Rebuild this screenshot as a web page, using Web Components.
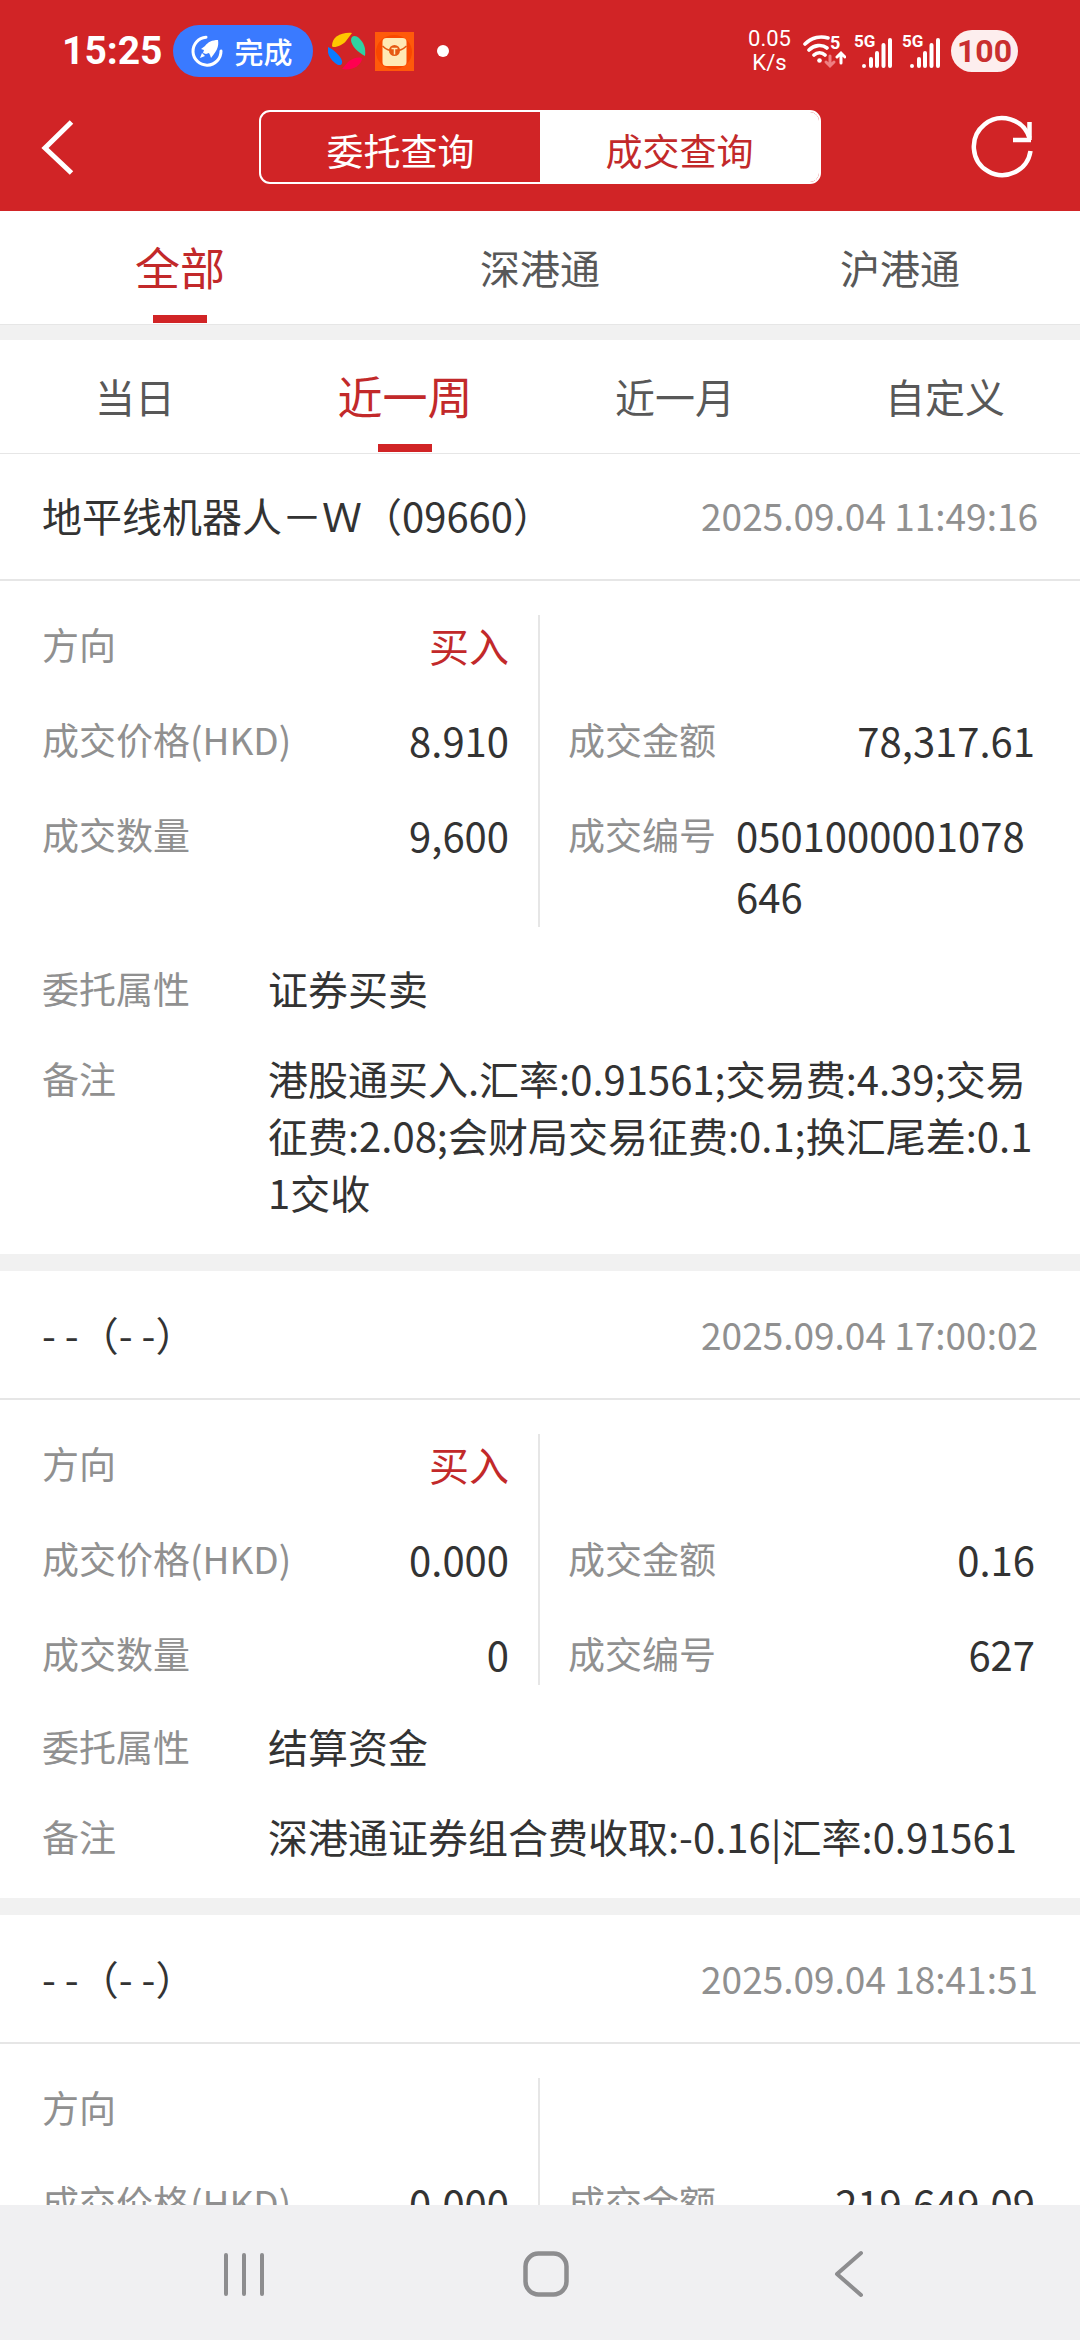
<!DOCTYPE html>
<html lang="zh-CN">
<head>
<meta charset="utf-8">
<meta name="viewport" content="width=device-width, initial-scale=1">
<title>成交查询</title>
<style>
  :root {
    --brand: #d12426;
    --brand-text: #c2292a;
    --line: #e6e6e6;
    --band: #f1f1f1;
    --ink: #333;
    --muted: #909090;
    --gutter: 42px;
  }
  body {
    margin: 0;
    height: 100vh;
    display: flex;
    flex-direction: column;
    background: #fff;
    color: var(--ink);
    font-family: "Noto Sans CJK SC", sans-serif;
    font-size: 40px;
  }
  main { flex: 1; min-height: 0; overflow: hidden; }
</style>
</head>
<body>
<status-bar></status-bar>
<title-bar></title-bar>
<tab-strip items="全部,深港通,沪港通" current="0" label="市场"></tab-strip>
<band-gap></band-gap>
<tab-strip items="当日,近一周,近一月,自定义" current="1" label="时间范围"></tab-strip>
<main>
  <trade-record name="地平线机器人－Ｗ（09660）" time="2025.09.04 11:49:16">
    <data-field slot="left" label="方向" tone="buy">买入</data-field>
    <data-field slot="left" label="成交价格(HKD)">8.910</data-field>
    <data-field slot="left" label="成交数量">9,600</data-field>
    <data-field slot="right"></data-field>
    <data-field slot="right" label="成交金额">78,317.61</data-field>
    <data-field slot="right" label="成交编号">0501000001078646</data-field>
    <note-field slot="notes" label="委托属性">证券买卖</note-field>
    <note-field slot="notes" label="备注">港股通买入.汇率:0.91561;交易费:4.39;交易征费:2.08;会财局交易征费:0.1;换汇尾差:0.11交收</note-field>
  </trade-record>
  <trade-record name="- -（- -）" time="2025.09.04 17:00:02">
    <data-field slot="left" label="方向" tone="buy">买入</data-field>
    <data-field slot="left" label="成交价格(HKD)">0.000</data-field>
    <data-field slot="left" label="成交数量">0</data-field>
    <data-field slot="right"></data-field>
    <data-field slot="right" label="成交金额">0.16</data-field>
    <data-field slot="right" label="成交编号">627</data-field>
    <note-field slot="notes" label="委托属性">结算资金</note-field>
    <note-field slot="notes" label="备注">深港通证券组合费收取:-0.16|汇率:0.91561</note-field>
  </trade-record>
  <trade-record name="- -（- -）" time="2025.09.04 18:41:51">
    <data-field slot="left" label="方向"></data-field>
    <data-field slot="left" label="成交价格(HKD)">0.000</data-field>
    <data-field slot="right"></data-field>
    <data-field slot="right" label="成交金额">219,649.09</data-field>
  </trade-record>
</main>
<system-nav></system-nav>

<script>
const define = (name, render) => customElements.define(name, class extends HTMLElement {
  connectedCallback() {
    if (this.shadowRoot) return;
    this.attachShadow({ mode: 'open' }).innerHTML = render(this);
  }
});

const signal = `
  <svg width="38" height="44" viewBox="0 -4 38 44" fill="none" stroke="#fff" stroke-width="4" stroke-linecap="round">
    <text x="0" y="14" font-family="Roboto" font-weight="700" font-size="17" fill="#fff" stroke="none">5G</text>
    <path d="M10 33v0M17 26v7M23 20v13M29.500 12v21M36 7v26"/>
  </svg>`;

define('status-bar', () => `
  <style>
    :host { display: flex; align-items: center; justify-content: space-between; height: 102px;
      padding: 0 62px 0 62px; background: var(--brand); color: #fff; font-family: Roboto, sans-serif; }
    .group { display: flex; align-items: center; }
    .time { font-size: 39px; font-weight: 700; line-height: 44px; margin-right: 10px; }
    .pill { display: flex; align-items: center; gap: 12px; height: 52px; padding: 0 20px 0 18px;
      border-radius: 26px; background: #3a7aff; margin-right: 15px;
      font: 500 29px/44px "Noto Sans CJK SC", sans-serif; }
    .fan { margin-right: 9px; }
    .dot { width: 12px; height: 12px; border-radius: 6px; background: #fff; margin-left: 23px; }
    .speed { font-size: 22px; line-height: 24px; text-align: center; margin-right: 12px; }
    .signals { display: flex; gap: 10px; margin: 0 11px 0 8px; }
    .battery { height: 42px; padding: 0 6px; border-radius: 21px; background: #fdeeee;
      color: #c92f2f; font-size: 32px; font-weight: 700; line-height: 43px; }
    svg { display: block; }
  </style>
  <div class="group">
    <span class="time">15:25</span>
    <span class="pill">
      <svg width="32" height="34" viewBox="0 0 32 34" fill="none">
        <path d="M15 3.200A14 14 0 1 0 30 17" stroke="#fff" stroke-width="3" stroke-linecap="round"/>
        <path d="M27 6c-6 0-10 2-13 6l-4 3 3 1-1 3 3 1 3-1 1 2 1 3 3-4c3-4 5-8 4-14Z" fill="#fff"/>
        <path d="M11 19l-2 5 5-2Z" fill="#fff"/>
      </svg>
      <span>完成</span>
    </span>
    <svg class="fan" width="38" height="38" viewBox="0 0 38 38">
      <path d="M4 14C4 5 13 0 24 1L18 9C15 13 5 17 4 14Z" fill="#ffc800"/>
      <path d="M23 8C23 3 28 3 31 6c5 5 7 10 6 18-6-3-14-10-14-16Z" fill="#2fd2a2"/>
      <path d="M0 15C5 17 13 24 14 29c1 5-4 5-7 2C1 26-1 21 0 15Z" fill="#0a7cff"/>
      <path d="M14 37l6-7c4-4 13-6 14-3C33 33 25 39 14 37Z" fill="#ff0050"/>
    </svg>
    <svg width="39" height="39" viewBox="0 0 39 39">
      <rect width="39" height="39" fill="#ff5a0a"/>
      <ellipse cx="19" cy="20" rx="18" ry="17" fill="#f94800"/>
      <rect x="7.500" y="6" width="24" height="28" rx="4" fill="#ffe9b5"/>
      <path d="M7.500 14c4 4 8 5 12 5s8-1 12-5" fill="none" stroke="#e65a12" stroke-width="1.500"/>
      <circle cx="19.500" cy="18.500" r="5.500" fill="#e65a12"/>
      <path d="M16.500 16.500h6M19.500 16.500v6" stroke="#ffe9b5" stroke-width="1.500"/>
    </svg>
    <span class="dot"></span>
  </div>
  <div class="group">
    <span class="speed">0.05<br>K/s</span>
    <svg width="43" height="42" viewBox="0 -4 43 42" fill="none" stroke="#fff" stroke-width="3.600" stroke-linecap="round">
      <path d="M2 10C9 3 18 2 25 4M6 16c5-5 13-6 18-2M11 21c3-3 8-3 11 0"/>
      <circle cx="16.500" cy="26.500" r="2.300" fill="#fff" stroke="none"/>
      <text x="27" y="15" font-family="Roboto" font-weight="700" font-size="18" fill="#fff" stroke="none">5</text>
      <path d="M27 22v9M23 28l4 4 4-4" stroke="#ef7f82" stroke-width="3"/>
      <path d="M38 29v-9M34 23l4-4 4 4" stroke-width="3"/>
    </svg>
    <span class="signals">${signal}${signal}</span>
    <span class="battery">100</span>
  </div>`);

define('title-bar', () => `
  <style>
    :host { display: grid; grid-template-columns: 1fr 562px 1fr; align-items: center;
      padding: 8px 36px 27px; background: var(--brand); }
    button { border: 0; background: none; padding: 0; margin: 0; color: #fff; font: inherit; }
    svg { display: block; }
    .back { justify-self: start; }
    .refresh { justify-self: end; }
    .switch { display: flex; box-sizing: border-box; height: 74px; border: 2px solid #fff;
      border-radius: 11px; overflow: hidden; }
    .switch button { flex: 1; padding-top: 6px; font-size: 37px; line-height: 64px; }
    .switch [aria-selected=true] { background: #fff; color: var(--brand-text); }
  </style>
  <button class="back" aria-label="返回">
    <svg width="44" height="60" viewBox="0 0 44 60" fill="none" stroke="#fff" stroke-width="5"><path d="M35.500 5L9 31l26.500 25"/></svg>
  </button>
  <div class="switch" role="tablist">
    <button role="tab" aria-selected="false">委托查询</button>
    <button role="tab" aria-selected="true">成交查询</button>
  </div>
  <button class="refresh" aria-label="刷新">
    <svg width="74" height="66" viewBox="0 0 74 66" fill="none" stroke="#fff" stroke-width="4.500">
      <path d="M59.500 24A28.500 28.500 0 1 0 60.500 37"/><path d="M59.500 8v18M43 26h18"/>
    </svg>
  </button>`);

define('tab-strip', el => `
  <style>
    :host { display: block; }
    div { display: flex; height: 113px; border-bottom: 1px solid var(--line); }
    button { flex: 1; display: flex; flex-direction: column; align-items: center; border: 0; padding: 0;
      background: none; color: #585858; font: inherit; font-size: 40px; line-height: 112px; }
    [aria-selected=true] { color: var(--brand-text); font-size: 45px; }
    [aria-selected=true]::after { content: ""; width: 54px; height: 8px; margin-top: -8px;
      background: var(--brand); }
  </style>
  <div role="tablist" aria-label="${el.getAttribute('label')}">
    ${el.getAttribute('items').split(',').map((t, i) =>
      `<button role="tab" aria-selected="${String(i) === el.getAttribute('current')}">${t}</button>`).join('')}
  </div>`);

define('band-gap', () => `<style>:host { display: block; height: 15px; background: var(--band); }</style>`);

define('data-field', el => `
  <style>
    :host { display: flex; justify-content: space-between; gap: 20px; min-height: 61px; }
    .label { flex: none; color: var(--muted); font-size: 37px; line-height: 59px; }
    .value { font-size: 40px; line-height: 61px; word-break: break-all; }
    :host([tone=buy]) .value { color: var(--brand-text); }
  </style>
  <span class="label">${el.getAttribute('label') || ''}</span><span class="value"><slot></slot></span>`);

define('note-field', el => `
  <style>
    :host { display: grid; grid-template-columns: 206px 1fr; gap: 20px; line-height: 57px; }
    .label { color: var(--muted); font-size: 37px; }
    .value { font-size: 40px; word-break: break-all; }
  </style>
  <span class="label">${el.getAttribute('label')}</span><span class="value"><slot></slot></span>`);

define('trade-record', el => `
  <style>
    :host { display: block; }
    :host(:not(:first-child)) { border-top: 17px solid var(--band); }
    header { display: flex; justify-content: space-between; align-items: center; padding: 34px var(--gutter);
      border-bottom: 2px solid var(--line); line-height: 59px; }
    :host(:first-child) header { padding-top: 32px; }
    h2 { margin: 0; font-size: 40px; font-weight: 400; white-space: pre; }
    time { color: var(--muted); font-size: 37px; }
    .grid { display: grid; grid-template-columns: 1fr 1fr; padding: 34px var(--gutter) 33px; }
    .col { display: flex; flex-direction: column; gap: 34px; }
    .left { padding-right: 29px; border-right: 2px solid var(--line); }
    .right { padding: 0 3px 0 28px; }
    .notes { display: flex; flex-direction: column; gap: 33px; padding: 0 var(--gutter) 33px; }
  </style>
  <article>
    <header><h2>${el.getAttribute('name')}</h2><time>${el.getAttribute('time')}</time></header>
    <div class="grid">
      <div class="col left"><slot name="left"></slot></div>
      <div class="col right"><slot name="right"></slot></div>
    </div>
    <div class="notes"><slot name="notes"></slot></div>
  </article>`);

define('system-nav', () => `
  <style>
    :host { display: flex; flex: none; height: 135px; padding: 0 81px 0 93px; background: #f0f0f2; }
    button { flex: 1; display: flex; align-items: center; justify-content: center; border: 0; padding: 2px 0 0; background: none; }
  </style>
  <button aria-label="最近任务"><svg width="50" height="50" viewBox="0 0 50 50" stroke="#8d8d8f" stroke-width="4" stroke-linecap="round"><path d="M7 6v39M25 6v39M43 6v39"/></svg></button>
  <button aria-label="主屏幕"><svg width="50" height="50" viewBox="0 0 50 50" fill="none" stroke="#8d8d8f" stroke-width="4.500"><rect x="4.500" y="4.500" width="41" height="41" rx="13"/></svg></button>
  <button aria-label="返回"><svg width="50" height="50" viewBox="0 0 50 50" fill="none" stroke="#8d8d8f" stroke-width="4" stroke-linecap="round" stroke-linejoin="round"><path d="M38 4L14 25l24 21"/></svg></button>`);
</script>
</body>
</html>
